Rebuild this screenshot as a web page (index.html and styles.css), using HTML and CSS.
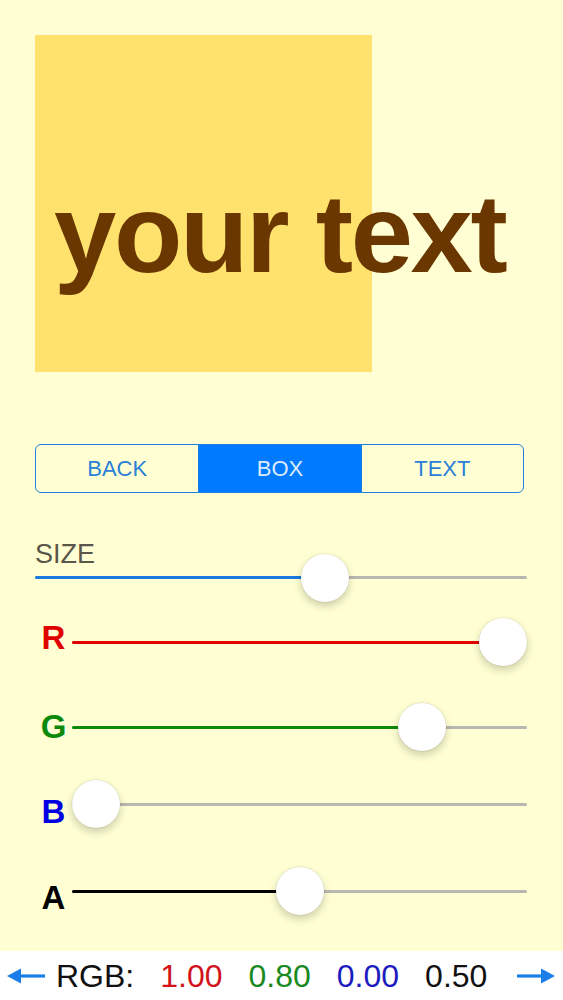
FILE: index.html
```html
<!DOCTYPE html>
<html lang="en">
<head>
<meta charset="utf-8">
<title>Text Box Colors</title>
<link rel="stylesheet" href="styles.css">
</head>
<body>
<div class="screen">
  <section class="stage">
    <div class="swatch"></div>
    <div class="caption">your text</div>
  </section>

  <div class="segmented">
    <div class="seg">BACK</div>
    <div class="seg active">BOX</div>
    <div class="seg">TEXT</div>
  </div>

  <div class="size-label">SIZE</div>
  <div class="track size-track" style="--v:0.6"><div class="fill"></div><div class="thumb"></div></div>

  <div class="slider-row row-r">
    <span class="chan">R</span>
    <div class="track" style="--v:1"><div class="fill"></div><div class="thumb"></div></div>
  </div>
  <div class="slider-row row-g">
    <span class="chan">G</span>
    <div class="track" style="--v:0.8"><div class="fill"></div><div class="thumb"></div></div>
  </div>
  <div class="slider-row row-b">
    <span class="chan">B</span>
    <div class="track" style="--v:0"><div class="fill"></div><div class="thumb"></div></div>
  </div>
  <div class="slider-row row-a">
    <span class="chan">A</span>
    <div class="track" style="--v:0.5"><div class="fill"></div><div class="thumb"></div></div>
  </div>

  <footer class="readout">
    <svg class="arrow" width="38" height="16" viewBox="0 0 38 16"><polygon points="0,8 14,0.5 14,15.5" fill="#1a7ee6"/><rect x="12" y="6.4" width="26" height="3.2" fill="#1a7ee6"/></svg>
    <div class="values">
      <span class="v-label">RGB:</span>
      <span class="v-r">1.00</span>
      <span class="v-g">0.80</span>
      <span class="v-b">0.00</span>
      <span class="v-a">0.50</span>
    </div>
    <svg class="arrow arrow-right" width="38" height="16" viewBox="0 0 38 16"><polygon points="38,8 24,0.5 24,15.5" fill="#1a7ee6"/><rect x="0" y="6.4" width="26" height="3.2" fill="#1a7ee6"/></svg>
  </footer>
</div>
</body>
</html>
```

FILE: styles.css
```css
html, body {
  margin: 0;
  padding: 0;
  background: #ffffd3;
}

.screen {
  height: 1000px;
  display: flex;
  flex-direction: column;
  font-family: "Liberation Sans", Arial, sans-serif;
  padding: 0 36px 0 35px;
  box-sizing: border-box;
  overflow: hidden;
}

.stage {
  display: grid;
  padding-top: 35px;
}

.swatch {
  grid-area: 1 / 1;
  width: 337px;
  height: 337px;
  background: #ffe26e;
}

.caption {
  grid-area: 1 / 1;
  align-self: start;
  margin-top: 143px;
  margin-left: 19px;
  font-size: 112px;
  line-height: 112px;
  font-weight: bold;
  letter-spacing: -2.4px;
  color: #6a3700;
  white-space: nowrap;
}

.segmented {
  margin-top: 72px;
  margin-right: 3px;
  height: 49px;
  box-sizing: border-box;
  display: grid;
  grid-template-columns: 1fr 1fr 1fr;
  border: 1.5px solid #1f7fe0;
  border-radius: 6px;
  overflow: hidden;
}

.seg {
  display: flex;
  align-items: center;
  justify-content: center;
  font-size: 22px;
  color: #2a80d8;
}

.seg + .seg {
  border-left: 1px solid #1f7fe0;
}

.seg.active {
  background: #007aff;
  color: #dcebfa;
}

.size-label {
  margin-top: 48px;
  font-size: 27px;
  line-height: 27px;
  color: #5a5649;
}

.track {
  position: relative;
  flex: 1;
  height: 3px;
  border-radius: 2px;
  background: #b9b8b0;
}

.size-track {
  flex: none;
  margin-top: 8px;
}

.fill {
  position: absolute;
  left: 0;
  top: 0;
  height: 100%;
  border-radius: 2px;
  width: calc(24px + (100% - 48px) * var(--v));
}

.thumb {
  position: absolute;
  top: 50%;
  left: calc(24px + (100% - 48px) * var(--v));
  width: 48px;
  height: 48px;
  margin: -24px 0 0 -24px;
  border-radius: 50%;
  background: #ffffff;
  box-shadow: 0 0 0 0.5px rgba(0, 0, 0, 0.1), 0 4px 9px rgba(0, 0, 0, 0.2);
}

.size-track .fill { background: #1a7ae0; }

.slider-row {
  display: flex;
  align-items: center;
  height: 40px;
}

.chan {
  width: 37px;
  text-align: center;
  font-size: 33px;
  line-height: 33px;
  font-weight: bold;
}

.row-r { margin-top: 43px; }
.row-r .chan { color: #e00000; margin-bottom: 9px; }
.row-r .fill { background: #e00000; }

.row-g { margin-top: 45px; }
.row-g .chan { color: #0b8a0b; margin-bottom: 2px; }
.row-g .fill { background: #0b8a0b; }

.row-b { margin-top: 37px; }
.row-b .chan { color: #0000e0; margin-top: 15px; }
.row-b .fill { background: #0000e0; }

.row-a { margin-top: 47px; }
.row-a .chan { color: #000000; margin-top: 13px; }
.row-a .fill { background: #000000; }

.readout {
  margin: auto -36px 0 -35px;
  height: 49px;
  background: #ffffff;
  display: flex;
  align-items: center;
  padding: 0 8px 0 7px;
}

.arrow {
  display: block;
  flex: none;
}

.arrow-right {
  margin-left: auto;
}

.values {
  display: flex;
  gap: 26px;
  margin-left: 11px;
  font-size: 32px;
  line-height: 32px;
  color: #111111;
}

.v-r { color: #d2141a; }
.v-g { color: #1a8a1f; }
.v-b { color: #1c1cbf; }
.v-a { color: #111111; }
```
